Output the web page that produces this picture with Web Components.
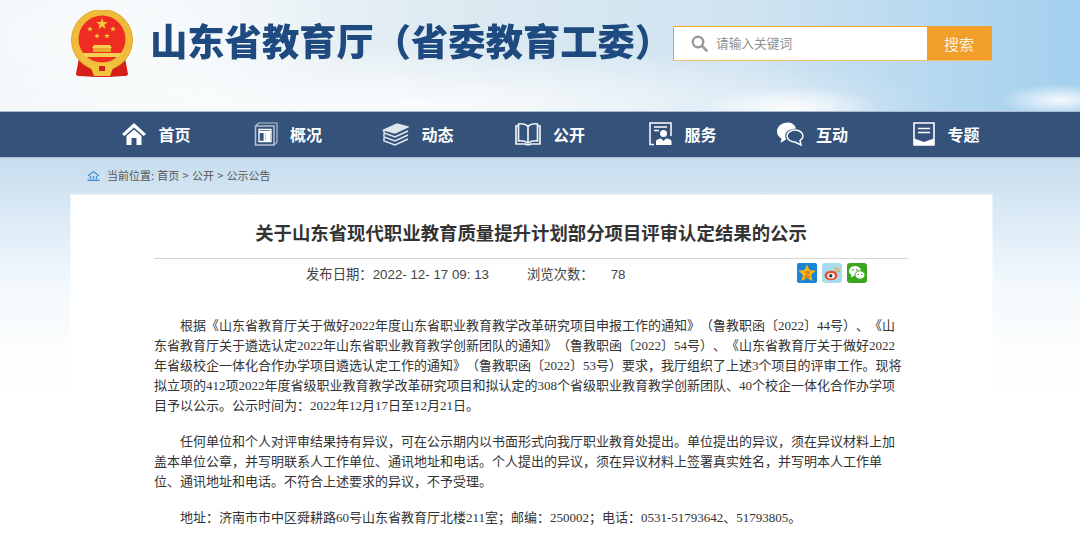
<!doctype html>
<html lang="zh">
<head>
<meta charset="utf-8">
<title>山东省教育厅</title>
<style>
  html, body { margin: 0; height: 100%; overflow: hidden; }
  body {
    font-family: "Liberation Sans", "Noto Sans CJK SC", sans-serif;
    background: linear-gradient(#c6dcee 158px, #dcebf6 220px, #f3f9fd 285px, #fcfdfe 350px, #fff 400px);
  }
</style>
</head>
<body>
<site-header>
  <state-emblem slot="emblem"></state-emblem>
  <search-box slot="search" placeholder="请输入关键词" button="搜索"></search-box>
  山东省教育厅（省委教育工委）
</site-header>

<main-nav>
  <nav-item icon="home">首页</nav-item>
  <nav-item icon="about">概况</nav-item>
  <nav-item icon="news">动态</nav-item>
  <nav-item icon="open">公开</nav-item>
  <nav-item icon="service">服务</nav-item>
  <nav-item icon="talk">互动</nav-item>
  <nav-item icon="topic">专题</nav-item>
</main-nav>

<bread-crumb>当前位置: 首页 &gt; 公开 &gt; 公示公告</bread-crumb>

<article-card>
  <span slot="title">关于山东省现代职业教育质量提升计划部分项目评审认定结果的公示</span>
  <article-meta slot="meta" date="2022- 12- 17 09: 13" views="78"></article-meta>
  <article-para>根据《山东省教育厅关于做好2022年度山东省职业教育教学改革研究项目申报工作的通知》（鲁教职函〔2022〕44号）、《山<br>东省教育厅关于遴选认定2022年山东省职业教育教学创新团队的通知》（鲁教职函〔2022〕54号）、《山东省教育厅关于做好2022<br>年省级校企一体化合作办学项目遴选认定工作的通知》（鲁教职函〔2022〕53号）要求，我厅组织了上述3个项目的评审工作。现将<br>拟立项的412项2022年度省级职业教育教学改革研究项目和拟认定的308个省级职业教育教学创新团队、40个校企一体化合作办学项<br>目予以公示。公示时间为：2022年12月17日至12月21日。</article-para>
  <article-para>任何单位和个人对评审结果持有异议，可在公示期内以书面形式向我厅职业教育处提出。单位提出的异议，须在异议材料上加<br>盖本单位公章，并写明联系人工作单位、通讯地址和电话。个人提出的异议，须在异议材料上签署真实姓名，并写明本人工作单<br>位、通讯地址和电话。不符合上述要求的异议，不予受理。</article-para>
  <article-para>地址：济南市市中区舜耕路60号山东省教育厅北楼211室；邮编：250002；电话：0531-51793642、51793805。</article-para>
</article-card>

<script>
// Each element just stamps its markup into an open shadow root
class Base extends HTMLElement {
  constructor() {
    super()
    this.attachShadow({ mode: 'open' })
  }
  connectedCallback() {
    this.shadowRoot.innerHTML = this.render()
  }
}

class SiteHeader extends Base {
  render() {
    return `
      <style>
        :host {
          display: flex;
          align-items: flex-start;
          height: 111px;
          box-sizing: border-box;
          padding: 10px 88px 0 71px;
          background:
            radial-gradient(ellipse 90px 22px at 790px 108px, rgba(255,255,255,.95), transparent),
            radial-gradient(ellipse 60px 16px at 1060px 100px, rgba(255,255,255,.9), transparent),
            radial-gradient(ellipse 520px 60px at 420px 105px, rgba(255,255,255,.85), transparent),
            radial-gradient(ellipse 240px 110px at 100px 40px, rgba(255,255,255,.7), transparent),
            linear-gradient(90deg, #eef4f7 0, #eff5f8 20%, #dbe9f1 45%, #cfe3f1 70%, #a3d0ee 100%);
        }
        .name {
          flex: 1;
          margin: 5px 0 0 17px;
          font: 900 37.300px/50px "Noto Sans CJK SC", sans-serif;
          color: #1f4a7f;
          white-space: nowrap;
          text-spacing-trim: space-all;
          filter: blur(.4px);
        }
      </style>
      <slot name="emblem"></slot>
      <div class="name"><slot></slot></div>
      <slot name="search"></slot>`
  }
}
customElements.define('site-header', SiteHeader)

class StateEmblem extends Base {
  render() {
    const star = (x, y, r) => {
      let pts = []
      for (let i = 0; i < 10; i++) {
        const a = -Math.PI / 2 + i * Math.PI / 5
        const d = i % 2 ? r * 0.42 : r
        pts.push((x + d * Math.cos(a)).toFixed(1) + ',' + (y + d * Math.sin(a)).toFixed(1))
      }
      return `<polygon points="${pts.join(' ')}" fill="#f5c53c"/>`
    }
    return `
      <style>:host { display: block; width: 62px; height: 68px; } svg { display: block; filter: blur(.4px); }</style>
      <svg width="62" height="68" viewBox="0 0 62 68">
        <path d="M8 48 L5 64 Q5 66 9 66 L24 67 L38 67 L53 66 Q57 66 57 64 L54 48 L31 58 Z" fill="#d7201a"/>
        <circle cx="31" cy="30" r="30.500" fill="#f0bb3a"/>
        <circle cx="31" cy="30" r="30.500" fill="none" stroke="#e2a52c" stroke-width="1"/>
        <circle cx="31" cy="29" r="23.500" fill="#ee2c22"/>
        ${star(31, 14, 6)}${star(19, 19, 3)}${star(42, 19, 3)}${star(26, 26, 2.800)}${star(36, 26, 2.800)}
        <path d="M23 35 h16 l2 3 h-20 Z" fill="#f6cf55"/>
        <path d="M22 38 h18 v4 h-18 Z" fill="#e9a92f"/>
        <path d="M12 43 H50 L48 47 H14 Z" fill="#f6cf55"/>
        <path d="M9 42 Q20 56 31 56 Q42 56 53 42 L53 46 Q42 61 31 61 Q20 61 9 46 Z" fill="#f3c140"/>
        <path d="M20 58 q5-6 11-5 q6-1 11 5 l-3 8 H23 Z" fill="#f4c33e"/>
        <path d="M28 56 h6 v5 h-6 Z" fill="#d7201a"/>
      </svg>`
  }
}
customElements.define('state-emblem', StateEmblem)

class SearchBox extends Base {
  render() {
    return `
      <style>
        :host {
          display: flex;
          width: 319px;
          height: 35px;
          margin-top: 16px;
          box-sizing: border-box;
          border: 1px solid #f1a32c;
          border-bottom-color: #f3c078;
          background: #fff;
          font: 12.700px/33px "Noto Sans CJK SC", sans-serif;
        }
        .field { flex: 1; display: flex; align-items: center; gap: 8px; padding-left: 17px; color: #8f8f8f; }
        .field span { margin-top: -2px; }
        button {
          width: 64px;
          border: 0;
          padding: 0 0 3px;
          background: #f29f2a;
          color: #fbeedd;
          font: inherit;
          font-size: 15px;
        }
      </style>
      <div class="field">
        <svg width="17" height="17" viewBox="0 0 17 17"><circle cx="7" cy="7" r="5.200" fill="none" stroke="#9a9a9a" stroke-width="2.400"/><path d="M11 11l4.500 4.500" stroke="#9a9a9a" stroke-width="2.600" stroke-linecap="round"/></svg>
        <span>${this.getAttribute('placeholder')}</span>
      </div>
      <button>${this.getAttribute('button')}</button>`
  }
}
customElements.define('search-box', SearchBox)

class MainNav extends Base {
  render() {
    return `
      <style>
        :host {
          display: grid;
          grid-template-columns: repeat(7, 131.500px);
          height: 45px;
          padding-left: 72px;
          background: #34527a;
          border-top: 1px solid #a9bccf;
          border-bottom: 1px solid #a7bfd6;
        }
      </style>
      <slot></slot>`
  }
}
customElements.define('main-nav', MainNav)

const NAV_ICONS = {
  home: `<svg width="24" height="24" viewBox="0 0 24 24" fill="#fff"><path d="M12 1 L24 12 L21.500 14 L12 5.500 L2.500 14 L0 12 Z"/><path d="M4.500 14 L12 7.500 L19.500 14 V23 H14.500 V16 H9.500 V23 H4.500 Z"/></svg>`,
  about: `<svg width="24" height="24" viewBox="0 0 24 24" fill="none" stroke="#b4c1d0"><path d="M1.500 4 H20 V23 H1.500 Z" stroke-width="1.500"/><path d="M1.500 4 L4.500 1 H23 V20 L20 23" stroke-width="1.200"/><path d="M5 7.500 H17 V19.500 H5 Z" stroke="#fff" stroke-width="1.300"/><path d="M5 10 H17 M10.500 10 V19" stroke="#fff" stroke-width="1.800"/><path d="M11.500 11 H16.500 V19 H11.500 Z" fill="#fff" stroke="none"/></svg>`,
  news: `<svg width="27" height="24" viewBox="0 0 27 24" fill="none" stroke="#dfe6ee" stroke-width="1.500"><path d="M2 8 L15 2 L26 5 L13 11 Z" fill="#dfe6ee"/><path d="M2 8 V11 L13 15 L26 9 M2 12 V15 L13 19 L26 13 M2 16 V19 L13 23 L26 17"/></svg>`,
  open: `<svg width="26" height="24" viewBox="0 0 26 24" fill="none" stroke="#eef2f6" stroke-width="1.700"><path d="M13 4 Q8 1 3.500 2 V19 Q8 18 13 21 Q18 18 22.500 19 V2 Q18 1 13 4 Z"/><path d="M13 4 V21"/><path d="M3.500 4 H1 V22 H10 Q13 23.500 16 22 H25 V4 H22.500"/></svg>`,
  service: `<svg width="23" height="24" viewBox="0 0 23 24" fill="none" stroke="#fff" stroke-width="1.500"><path d="M5 22.500 H1 V1 H22 V14"/><path d="M5 5 H18 M5 8.500 H10" stroke-width="1.300"/><circle cx="14.500" cy="11.500" r="3.500" fill="#fff" stroke="none"/><path d="M7 23 V19 Q8 17 12 16.500 L14.500 19 L17 16.500 Q22 17 22.500 19 V23 Z" fill="#fff" stroke="none"/></svg>`,
  talk: `<svg width="27" height="24" viewBox="0 0 27 24"><path d="M11 0.500 C4 0.500 0 5 0 9.500 C0 13 2.500 15.500 4.500 16.500 L3.500 21 L9 17.500 C7 12 9 7 19 6.500 C18 3 15 0.500 11 0.500 Z" fill="#fff"/><path d="M18 8 C13 8 10 11 10 14 C10 17.500 14 20 18 20 L24 23 L23 18.500 C25 17 26 15.500 26 14 C26 11 23 8 18 8 Z" fill="none" stroke="#fff" stroke-width="1.500"/></svg>`,
  topic: `<svg width="22" height="24" viewBox="0 0 22 24" fill="none" stroke="#fff" stroke-width="1.600"><path d="M1 1 H21 V23 H1 Z"/><path d="M5 6.500 H17 M5 10.500 H17" stroke-width="1.500"/><path d="M1 23 V16.500 L11 20 L21 16.500 V23 Z" fill="#fff" stroke="none"/></svg>`,
}

class NavItem extends Base {
  render() {
    return `
      <style>
        :host {
          display: flex;
          align-items: center;
          justify-content: flex-end;
          gap: 12px;
          padding: 0 13px 2px 0;
          color: #fff;
          font: 700 16px/1 "Noto Sans CJK SC", sans-serif;
        }
        svg { display: block; }
      </style>
      ${NAV_ICONS[this.getAttribute('icon')]}
      <slot></slot>`
  }
}
customElements.define('nav-item', NavItem)

class BreadCrumb extends Base {
  render() {
    return `
      <style>
        :host {
          display: flex;
          align-items: center;
          gap: 7px;
          height: 35px;
          padding: 0 0 2px 87px;
          color: #555;
          font: 11px/1 "Noto Sans CJK SC", sans-serif;
          word-spacing: 0.800px;
          white-space: nowrap;
        }
      </style>
      <svg width="13" height="11" viewBox="0 0 13 11" fill="none" stroke="#3f8ad0" stroke-width="1.200"><path d="M1 6 L6.500 1.500 L12 6"/><path d="M3.500 6 V9 M6.500 6 V9 M9.500 6 V9"/><path d="M0.500 10.300 H12.500" stroke-width="1.400"/></svg>
      <span><slot></slot></span>`
  }
}
customElements.define('bread-crumb', BreadCrumb)

class ArticleCard extends Base {
  render() {
    return `
      <style>
        :host {
          display: block;
          width: 921px;
          height: 342px;
          margin-left: 71px;
          box-sizing: border-box;
          padding: 0 84px 0 83px;
          background: #fff;
          box-shadow: 0 0 0 1px rgba(255,255,255,.5);
        }
        h1 {
          margin: 0;
          padding-top: 23px;
          height: 40px;
          text-align: center;
          font: 700 18.400px/28px "Noto Sans CJK SC", sans-serif;
          color: #333;
          border-bottom: 1px solid #d5d5d5;
          white-space: nowrap;
        }
        .body { padding-top: 25px; }
      </style>
      <h1><slot name="title"></slot></h1>
      <slot name="meta"></slot>
      <div class="body"><slot></slot></div>`
  }
}
customElements.define('article-card', ArticleCard)

class ArticleMeta extends Base {
  render() {
    return `
      <style>
        :host {
          display: flex;
          align-items: center;
          height: 32px;
          padding: 0 41px 0 152px;
          color: #444;
          font: 13.330px/1 "Liberation Sans", "Noto Sans CJK SC", sans-serif;
          white-space: nowrap;
          text-spacing-trim: space-all;
        }
        .date { margin-right: 38px; }
        .views { margin-left: 17px; flex: 1; }
        share-icons { margin-top: -4px; }
      </style>
      <span>发布日期：</span><span class="date">${this.getAttribute('date')}</span>
      <span>浏览次数：</span><span class="views">${this.getAttribute('views')}</span>
      <share-icons></share-icons>`
  }
}
customElements.define('article-meta', ArticleMeta)

class ShareIcons extends Base {
  render() {
    return `
      <style>
        :host { display: flex; gap: 5px; }
        svg { display: block; }
      </style>
      <svg width="20" height="20" viewBox="0 0 20 20"><rect width="20" height="20" rx="2" fill="#1a84d8"/><path d="M10 1.500 L12.600 7 L18.800 7.700 L14.200 11.800 L15.500 18 L10 14.900 L4.500 18 L5.800 11.800 L1.200 7.700 L7.400 7 Z" fill="#f8b717"/><path d="M7.500 9 H12.500 L8 14 H13" fill="none" stroke="#d9730f" stroke-width="1.300"/></svg>
      <svg width="20" height="20" viewBox="0 0 20 20"><rect width="20" height="20" rx="3" fill="#a6dcee"/><ellipse cx="9" cy="12.500" rx="6.500" ry="4.800" fill="#e8502f"/><ellipse cx="9" cy="12.800" rx="3.800" ry="2.800" fill="#fff"/><circle cx="8.800" cy="12.800" r="1.700" fill="#333"/><path d="M12 5 Q17 4 17.500 9 M12.500 7.500 Q15 7 15.300 9.300" fill="none" stroke="#f2a23a" stroke-width="1.200"/></svg>
      <svg width="20" height="20" viewBox="0 0 20 20"><rect width="20" height="20" rx="3" fill="#3aa51e"/><ellipse cx="8" cy="8" rx="6" ry="5" fill="#fff"/><path d="M4.500 11.500 L4 14.500 L7.500 12.500 Z" fill="#fff"/><ellipse cx="13" cy="12" rx="5" ry="4.200" fill="#fff" stroke="#3aa51e"/><circle cx="6" cy="6.800" r=".9" fill="#3aa51e"/><circle cx="10" cy="6.800" r=".9" fill="#3aa51e"/><circle cx="11.300" cy="11.500" r=".7" fill="#3aa51e"/><circle cx="14.700" cy="11.500" r=".7" fill="#3aa51e"/></svg>`
  }
}
customElements.define('share-icons', ShareIcons)

class ArticlePara extends Base {
  render() {
    return `
      <style>
        :host {
          display: block;
          margin-bottom: 16px;
          color: #333;
          font: 13px/20px "Liberation Serif", "Noto Sans CJK SC", serif;
          white-space: nowrap;
          text-spacing-trim: space-all;
        }
        div { text-indent: 26px; }
      </style>
      <div><slot></slot></div>`
  }
}
customElements.define('article-para', ArticlePara)
</script>
</body>
</html>
